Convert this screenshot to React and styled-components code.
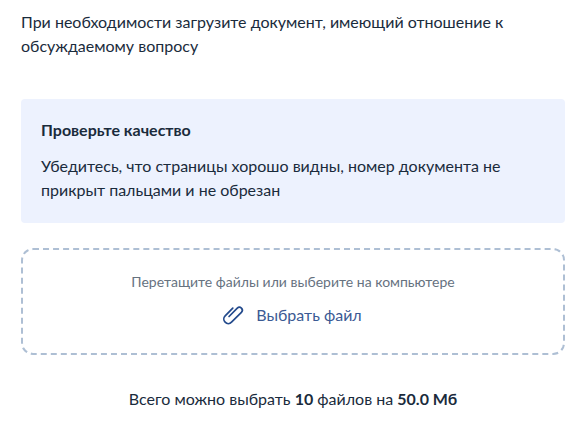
import React from "react";
import styled, { createGlobalStyle } from "styled-components";

const Global = createGlobalStyle`
  html, body { margin: 0; padding: 0; background: #fff; }
  body { font-family: Lato, "Noto Sans", sans-serif; color: #1a2b3c; }
`;

const Page = styled.div`
  width: 581px;
  height: 425px;
  box-sizing: border-box;
  padding: 10px 16px 0 21px;
  overflow: hidden;
`;

const Intro = styled.p`
  margin: 0 0 41px;
  font-size: 16px;
  line-height: 24px;
`;

const Notice = styled.section`
  box-sizing: border-box;
  height: 124px;
  padding: 19px 20px;
  border-radius: 4px;
  background: #edf2fe;
  margin-bottom: 25px;
`;

const NoticeTitle = styled.h3`
  margin: 0 0 12px;
  font-size: 16px;
  line-height: 24px;
  font-weight: 700;
`;

const NoticeText = styled.p`
  margin: 0;
  font-size: 16px;
  line-height: 24px;
`;

const Drop = styled.div`
  box-sizing: border-box;
  height: 107px;
  border: 2px dashed #aebfd4;
  border-radius: 12px;
  display: flex;
  flex-direction: column;
  align-items: center;
  padding-top: 22px;
`;

const Hint = styled.div`
  font-size: 14px;
  line-height: 20px;
  color: #66727f;
  margin-bottom: 11px;
`;

const Pick = styled.button`
  display: flex;
  align-items: center;
  gap: 10px;
  border: 0;
  background: none;
  padding: 0 2px 0 0;
  font: inherit;
  font-size: 16px;
  line-height: 24px;
  color: #3b5a94;
`;

const Clip = styled.svg`
  width: 24px;
  height: 24px;
  fill: none;
  stroke: #234a8c;
  stroke-width: 1.7;
  stroke-linecap: round;
  stroke-linejoin: round;
`;

const Summary = styled.p`
  margin: 32px 0 0;
  text-align: center;
  font-size: 16px;
  line-height: 24px;
`;

export default function App() {
  return (
    <Page>
      <Global />
      <Intro>
        При необходимости загрузите документ, имеющий отношение к
        <br />
        обсуждаемому вопросу
      </Intro>
      <Notice>
        <NoticeTitle>Проверьте качество</NoticeTitle>
        <NoticeText>
          Убедитесь, что страницы хорошо видны, номер документа не
          <br />
          прикрыт пальцами и не обрезан
        </NoticeText>
      </Notice>
      <Drop>
        <Hint>Перетащите файлы или выберите на компьютере</Hint>
        <Pick type="button">
          <Clip viewBox="1.5 0 24 24">
            <path
              transform="rotate(45 12 12)"
              d="M7.4 7 L7.4 17.8 A4.5 4.5 0 0 0 16.4 17.8 L16.4 3.8 A2.9 2.9 0 0 0 10.6 3.8 L10.6 15.5"
            />
          </Clip>
          Выбрать файл
        </Pick>
      </Drop>
      <Summary>
        Всего можно выбрать <b>10</b> файлов на <b>50.0 Мб</b>
      </Summary>
    </Page>
  );
}
